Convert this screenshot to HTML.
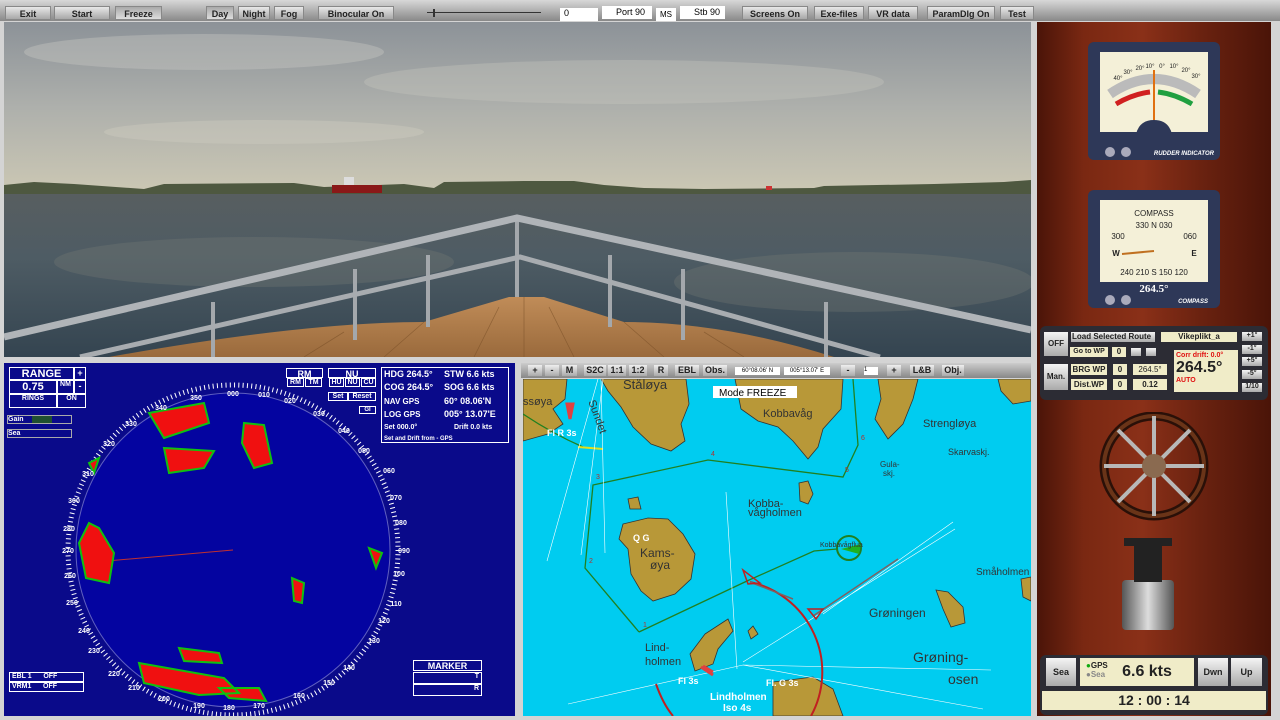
<!DOCTYPE html><html><head><style>
*{margin:0;padding:0;box-sizing:border-box}
body{width:1280px;height:720px;background:#d4d4d4;font-family:"Liberation Sans",sans-serif;position:relative;overflow:hidden}
.a{position:absolute}
.btn{position:absolute;top:6px;height:14px;background:linear-gradient(#e8e8e8,#a8a8a8);font:bold 9px "Liberation Sans",sans-serif;color:#222;text-align:center;line-height:14px;border:1px solid #888}
.cb{position:absolute;top:365px;height:11px;background:linear-gradient(#eee,#aaa);font:bold 9px "Liberation Sans";text-align:center;line-height:11px;color:#222}
.rb{position:absolute;border:1px solid #fff;color:#fff;font:bold 9px "Liberation Sans";text-align:center}
.pb{position:absolute;background:#f0ecc8;font:bold 8px "Liberation Sans";color:#222;text-align:center;line-height:11px}
.gb{position:absolute;background:linear-gradient(#f4f4f4,#aaa);font:bold 8px "Liberation Sans";color:#222;text-align:center}
</style></head><body>
<div class="a" style="left:0;top:0;width:1280px;height:21px;background:linear-gradient(#d8d8d8,#888)"></div>
<div class="btn" style="left:5px;width:46px">Exit</div>
<div class="btn" style="left:54px;width:56px">Start</div>
<div class="btn" style="left:115px;width:47px;background:linear-gradient(#aaa,#ddd)">Freeze</div>
<div class="btn" style="left:206px;width:28px;background:linear-gradient(#aaa,#ddd)">Day</div>
<div class="btn" style="left:238px;width:32px">Night</div>
<div class="btn" style="left:274px;width:30px">Fog</div>
<div class="btn" style="left:318px;width:76px">Binocular On</div>
<div class="a" style="left:427px;top:12px;width:114px;height:1px;background:#333"></div>
<div class="a" style="left:433px;top:9px;width:2px;height:8px;background:#333"></div>
<div class="a" style="left:560px;top:8px;width:38px;height:13px;background:#fff;font-size:9px;padding-left:4px">0</div>
<div class="a" style="left:602px;top:6px;width:50px;height:13px;background:#fff;font-size:9px;padding-left:14px;line-height:13px">Port 90</div>
<div class="a" style="left:656px;top:8px;width:20px;height:13px;background:#fff;font-size:8px;line-height:13px;text-align:center">MS</div>
<div class="a" style="left:680px;top:6px;width:45px;height:13px;background:#fff;font-size:9px;padding-left:14px;line-height:13px">Stb 90</div>
<div class="btn" style="left:742px;width:66px">Screens On</div>
<div class="btn" style="left:814px;width:50px">Exe-files</div>
<div class="btn" style="left:868px;width:50px">VR data</div>
<div class="btn" style="left:927px;width:68px">ParamDlg On</div>
<div class="btn" style="left:1000px;width:34px">Test</div>

<!-- 3D view -->
<svg class="a" style="left:4px;top:22px" width="1027" height="335" viewBox="0 0 1027 335">
<defs><linearGradient id="sky" x1="0" y1="0" x2="0" y2="1"><stop offset="0" stop-color="#8c9298"/><stop offset=".5" stop-color="#aeb0ac"/><stop offset="1" stop-color="#ccc8b4"/></linearGradient>
<linearGradient id="sea" x1="0" y1="0" x2="0" y2="1"><stop offset="0" stop-color="#585e60"/><stop offset=".4" stop-color="#4e5c64"/><stop offset="1" stop-color="#344450"/></linearGradient>
<linearGradient id="deck" x1="0" y1="0" x2="0" y2="1"><stop offset="0" stop-color="#c08c58"/><stop offset="1" stop-color="#9a6a3c"/></linearGradient></defs>
<rect width="1027" height="172" fill="url(#sky)"/>
<ellipse cx="200" cy="30" rx="180" ry="18" fill="#c8c8c4" opacity=".4"/>
<ellipse cx="620" cy="60" rx="260" ry="22" fill="#c8c8c0" opacity=".35"/>
<ellipse cx="260" cy="110" rx="160" ry="12" fill="#d0ccc0" opacity=".4"/>
<rect y="170" width="1027" height="165" fill="url(#sea)"/>
<ellipse cx="250" cy="240" rx="200" ry="25" fill="#7a7e78" opacity=".3"/>
<ellipse cx="850" cy="260" rx="180" ry="30" fill="#7a7e78" opacity=".3"/>
<path d="M0 163 L30 160 L70 162 L140 167 L160 162 L290 161 L320 165 L400 162 L430 166 L440 160 L520 159 L570 159 L600 163 L640 166 L700 167 L810 166 L820 164 L930 162 L1000 160 L1027 158 L1027 172 L0 172Z" fill="#4e5840"/>
<rect x="328" y="163" width="50" height="8" fill="#8a1818"/><rect x="340" y="155" width="10" height="8" fill="#ddd"/>
<rect x="762" y="164" width="6" height="4" fill="#c33"/>
<path d="M105 335 Q300 300 420 300 L505 275 L540 275 L620 300 Q720 300 830 335Z" fill="url(#deck)"/>
<g stroke="#7a5028" stroke-width=".8" opacity=".6"><path d="M520 275 L520 335 M495 285 L470 335 M545 285 L570 335 M420 300 L380 335 M620 300 L660 335 M340 310 L300 335 M700 310 L740 335"/></g>
<g stroke="#a4a8ac" stroke-width="4"><path d="M209 280 V335 M351 247 V318 M424 233 V305 M513 199 V275 M606 233 V305 M679 247 V318 M822 280 V335"/></g>
<path d="M0 315 L513 196 L1027 308" fill="none" stroke="#b0b4b8" stroke-width="7"/>
<path d="M76 335 L516 235 L876 335" fill="none" stroke="#a8acb0" stroke-width="5"/>
</svg>

<!-- Radar -->
<div class="a" style="left:4px;top:363px;width:511px;height:353px;background:#0a0a8a"></div>
<svg class="a" style="left:4px;top:363px" width="511" height="353">
<circle cx="229" cy="187" r="157" fill="#0404a0" stroke="#6060c0" stroke-width="1"/>
<circle cx="229" cy="187" r="165" fill="none" stroke="#fff" stroke-width="5" stroke-dasharray="1 3.3"/>
<line x1="229" y1="187" x2="80" y2="200" stroke="#c03030"/>
<g fill="#f01010" stroke="#10c010" stroke-width="2">
<path d="M145 50 L200 40 L205 60 L160 75 Z M160 85 L210 88 L200 105 L165 110Z M240 60 L260 62 L268 100 L250 105 L238 80Z M85 160 L95 165 L110 190 L105 220 L82 215 L75 180Z M288 215 L300 220 L298 240 L290 238Z M135 300 L220 315 L235 330 L195 332 L140 320Z M175 285 L215 290 L218 300 L180 298Z M85 100 L95 95 L90 110Z M365 185 L378 190 L372 205Z M215 325 L255 325 L262 338 L225 335Z"/>
</g>
<g fill="#fff" font-size="7" font-weight="bold" font-family="Liberation Sans" text-anchor="middle">
<text x="229" y="33">000</text><text x="192" y="37">350</text><text x="157" y="47">340</text><text x="127" y="63">330</text><text x="105" y="83">320</text><text x="84" y="113">310</text><text x="70" y="140">300</text><text x="65" y="168">280</text><text x="64" y="190">270</text><text x="66" y="215">260</text><text x="68" y="242">250</text><text x="80" y="270">240</text><text x="90" y="290">230</text><text x="110" y="313">220</text><text x="130" y="327">210</text><text x="160" y="338">200</text><text x="195" y="345">190</text><text x="225" y="347">180</text><text x="255" y="345">170</text><text x="295" y="335">160</text><text x="325" y="322">150</text><text x="345" y="307">140</text><text x="370" y="280">130</text><text x="380" y="260">120</text><text x="392" y="243">110</text><text x="395" y="213">100</text><text x="400" y="190">090</text><text x="397" y="162">080</text><text x="392" y="137">070</text><text x="385" y="110">060</text><text x="360" y="90">050</text><text x="340" y="70">040</text><text x="315" y="53">030</text><text x="286" y="40">020</text><text x="260" y="34">010</text>
</g></svg>
<div class="rb" style="left:9px;top:367px;width:65px;height:13px;font-size:11px">RANGE</div>
<div class="rb" style="left:74px;top:367px;width:12px;height:13px">+</div>
<div class="rb" style="left:9px;top:380px;width:48px;height:14px;font-size:11px">0.75</div>
<div class="rb" style="left:57px;top:380px;width:17px;height:14px;font-size:7px">NM</div>
<div class="rb" style="left:74px;top:380px;width:12px;height:14px">-</div>
<div class="rb" style="left:9px;top:394px;width:48px;height:14px;font-size:7px">RINGS</div>
<div class="rb" style="left:57px;top:394px;width:29px;height:14px;font-size:7px">ON</div>
<div class="rb" style="left:7px;top:415px;width:65px;height:9px;font-size:7px;text-align:left;border-color:#aaa">Gain<span style="position:absolute;left:24px;top:0;width:20px;height:7px;background:#205030"></span></div>
<div class="rb" style="left:7px;top:429px;width:65px;height:9px;font-size:7px;text-align:left;border-color:#aaa">Sea</div>
<div class="rb" style="left:286px;top:368px;width:37px;height:10px">RM</div>
<div class="rb" style="left:287px;top:378px;width:17px;height:9px;font-size:7px">RM</div><div class="rb" style="left:305px;top:378px;width:17px;height:9px;font-size:7px">TM</div>
<div class="rb" style="left:328px;top:368px;width:48px;height:10px">NU</div>
<div class="rb" style="left:329px;top:378px;width:15px;height:9px;font-size:7px">HU</div><div class="rb" style="left:345px;top:378px;width:15px;height:9px;font-size:7px">NU</div><div class="rb" style="left:361px;top:378px;width:15px;height:9px;font-size:7px">CU</div>
<div class="rb" style="left:328px;top:392px;width:20px;height:9px;font-size:7px">Set</div><div class="rb" style="left:348px;top:392px;width:28px;height:9px;font-size:7px">Reset</div>
<div class="rb" style="left:359px;top:406px;width:17px;height:8px;font-size:6px">GI</div>
<div class="a" style="left:381px;top:367px;width:128px;height:76px;border:1px solid #fff;color:#fff;font:bold 9px 'Liberation Sans';line-height:13px">
<div style="position:absolute;left:2px;top:0">HDG 264.5°</div><div style="position:absolute;left:62px;top:0">STW 6.6 kts</div>
<div style="position:absolute;left:2px;top:13px">COG 264.5°</div><div style="position:absolute;left:62px;top:13px">SOG 6.6 kts</div>
<div style="position:absolute;left:2px;top:27px;font-size:8px">NAV GPS</div><div style="position:absolute;left:62px;top:27px">60° 08.06'N</div>
<div style="position:absolute;left:2px;top:40px;font-size:8px">LOG GPS</div><div style="position:absolute;left:62px;top:40px">005° 13.07'E</div>
<div style="position:absolute;left:2px;top:53px;font-size:7px">Set 000.0°</div><div style="position:absolute;left:72px;top:53px;font-size:7px">Drift 0.0 kts</div>
<div style="position:absolute;left:2px;top:65px;font-size:6px">Set and Drift from -  GPS</div></div>
<div class="rb" style="left:9px;top:672px;width:75px;height:10px;font-size:7px;text-align:left">&nbsp;EBL 1 &nbsp;&nbsp;&nbsp;&nbsp;&nbsp;OFF</div>
<div class="rb" style="left:9px;top:682px;width:75px;height:10px;font-size:7px;text-align:left">&nbsp;VRM1 &nbsp;&nbsp;&nbsp;&nbsp;&nbsp;OFF</div>
<div class="rb" style="left:413px;top:660px;width:69px;height:11px">MARKER</div>
<div class="rb" style="left:413px;top:672px;width:69px;height:12px;font-size:7px;text-align:right">T&nbsp;</div>
<div class="rb" style="left:413px;top:684px;width:69px;height:12px;font-size:7px;text-align:right">R&nbsp;</div>

<!-- Chart -->
<div class="a" style="left:521px;top:363px;width:510px;height:15px;background:linear-gradient(#ccc,#888)"></div>
<div class="cb" style="left:528px;width:14px">+</div><div class="cb" style="left:545px;width:14px">-</div><div class="cb" style="left:562px;width:15px">M</div><div class="cb" style="left:584px;width:22px">S2C</div><div class="cb" style="left:608px;width:18px">1:1</div><div class="cb" style="left:629px;width:18px">1:2</div><div class="cb" style="left:654px;width:14px">R</div><div class="cb" style="left:675px;width:24px">EBL</div><div class="cb" style="left:703px;width:24px">Obs.</div>
<div class="a" style="left:735px;top:367px;width:45px;height:8px;background:#fff;font-size:6px;text-align:center;line-height:8px">60°08.06' N</div>
<div class="a" style="left:784px;top:367px;width:46px;height:8px;background:#fff;font-size:6px;text-align:center;line-height:8px">005°13.07' E</div>
<div class="cb" style="left:841px;width:14px">-</div><div class="a" style="left:864px;top:367px;width:14px;height:8px;background:#fff;font-size:6px">1</div><div class="cb" style="left:887px;width:14px">+</div><div class="cb" style="left:910px;width:24px">L&amp;B</div><div class="cb" style="left:942px;width:22px">Obj.</div>
<svg class="a" style="left:523px;top:379px" width="508" height="337">
<rect width="508" height="337" fill="#00ccf0"/>
<g fill="#b89838" stroke="#333" stroke-width=".8">
<path d="M0 0 L44 0 L42 20 L30 30 L40 45 L25 55 L0 62Z"/>
<path d="M78 0 L163 0 L166 25 L158 45 L162 62 L148 72 L128 65 L110 48 L98 28 L85 12Z"/>
<path d="M212 0 L320 0 L318 30 L300 50 L295 68 L285 80 L270 62 L255 48 L235 42 L218 30Z"/>
<path d="M355 0 L395 0 L390 20 L380 45 L365 60 L352 40 L358 20Z"/>
<path d="M475 0 L508 0 L508 22 L490 25 L478 12Z"/>
<path d="M100 145 L125 139 L145 140 L160 155 L172 175 L168 200 L152 215 L130 222 L118 212 L108 195 L105 170 L96 160Z"/>
<path d="M105 120 L115 118 L118 130 L107 130Z"/>
<path d="M182 255 L205 240 L210 252 L195 270 L190 285 L172 292 L167 275Z"/>
<path d="M250 303 L290 298 L310 310 L320 337 L250 337Z"/>
<path d="M413 211 L425 213 L440 228 L442 244 L428 248 L420 230Z"/>
<path d="M498 200 L508 198 L508 222 L500 218Z"/>
<path d="M276 104 L285 102 L290 115 L285 125 L277 122Z"/>
<path d="M225 252 L230 247 L235 255 L228 260Z"/>
</g>
<path d="M116 253 L62 189 L70 106 L185 81 L320 98 L335 66 L330 0 M116 253 L224 202 L291 172 L314 170" fill="none" stroke="#208020" stroke-width="1.3"/>
<path d="M0 35 Q30 55 60 68" fill="none" stroke="#208020" stroke-width="1.3"/>
<path d="M55 68 L80 70" stroke="#e0e020" stroke-width="2"/>
<path d="M75 0 L24 182 M80 0 L58 176 M78 0 L82 174 M203 113 L214 290 M430 143 L300 235 M432 150 L220 283 M220 286 L468 291 M220 286 L45 325 M220 286 L460 330" stroke="#fff" stroke-width=".6"/>
<path d="M227 203 A92 92 0 0 1 288 337" fill="none" stroke="#c02020" stroke-width="2"/>
<path d="M133 305 Q140 325 150 337" fill="none" stroke="#c02020" stroke-width="2"/>
<path d="M227 203 L270 220 M290 237 L375 180" stroke="#806060" stroke-width="1.5"/>
<path d="M220 191 L225 205 L237 204Z M285 230 L300 230 L293 240Z" fill="none" stroke="#c02020" stroke-width="1.5"/>
<circle cx="326" cy="169" r="12" fill="none" stroke="#208020" stroke-width="2"/>
<path d="M318 170 L338 165 L336 175Z" fill="#20b020"/>
<path d="M44 25 L50 25 L47 40Z M180 287 L190 293 M178 288 L190 296" stroke="#e04040" stroke-width="3" fill="#e04040"/>
<rect x="190" y="7" width="84" height="12" fill="#fff"/>
<g font-family="Liberation Sans" fill="#333" font-size="11"><text x="196" y="17" font-size="10" fill="#000">Mode  FREEZE</text>
<text x="100" y="10" font-size="13">Ståløya</text><text x="0" y="26" font-size="11">ssøya</text><text x="240" y="38">Kobbavåg</text><text x="400" y="48">Strengløya</text><text x="425" y="76" font-size="9">Skarvaskj.</text><text x="225" y="128" font-size="11">Kobba-</text><text x="225" y="137" font-size="11">vågholmen</text><text x="117" y="178" font-size="12">Kams-</text><text x="127" y="190" font-size="12">øya</text><text x="346" y="238" font-size="12">Grøningen</text><text x="390" y="283" font-size="14">Grøning-</text><text x="425" y="305" font-size="14">osen</text><text x="453" y="196" font-size="10">Småholmen</text><text x="122" y="272" font-size="11">Lind-</text><text x="122" y="286" font-size="11">holmen</text><text x="357" y="88" font-size="8">Gula-</text><text x="360" y="97" font-size="8">skj.</text><text x="297" y="168" font-size="7">Kobbavågflua</text></g>
<g fill="#b03030" font-family="Liberation Sans" font-size="7"><text x="120" y="248">1</text><text x="66" y="184">2</text><text x="73" y="100">3</text><text x="188" y="77">4</text><text x="322" y="93">5</text><text x="338" y="61">6</text></g>
<g fill="#fff" font-family="Liberation Sans" font-size="9" font-weight="bold"><text x="24" y="57">Fl R 3s</text><text x="110" y="162">Q G</text><text x="155" y="305">Fl 3s</text><text x="243" y="307">Fl. G 3s</text><text x="187" y="321" font-size="10">Lindholmen</text><text x="200" y="332" font-size="10">Iso 4s</text></g>
<text x="60" y="30" font-family="Liberation Sans" font-size="11" fill="#333" transform="rotate(70 68 30)">Sundet</text>
</svg>

<!-- Right panel -->
<div class="a" style="left:1037px;top:22px;width:234px;height:694px;background:linear-gradient(90deg,#4a1408,#7a2812 20%,#8a3018 45%,#6a2210 70%,#4a1408)"></div>
<svg class="a" style="left:1088px;top:42px" width="132" height="270">
<rect width="132" height="118" rx="6" fill="#2e3858"/>
<rect x="12" y="10" width="108" height="92" fill="#f4f0d8"/>
<path d="M22 52 Q66 22 110 52" fill="none" stroke="#bbb" stroke-width="10"/>
<path d="M28 62 Q45 52 62 50" fill="none" stroke="#d02020" stroke-width="5"/>
<path d="M70 50 Q87 52 104 62" fill="none" stroke="#20a040" stroke-width="5"/>
<g font-family="Liberation Sans" font-size="6" fill="#222" text-anchor="middle"><text x="30" y="38">40°</text><text x="40" y="32">30°</text><text x="52" y="28">20°</text><text x="62" y="26">10°</text><text x="74" y="26">0°</text><text x="86" y="26">10°</text><text x="98" y="30">20°</text><text x="108" y="36">30°</text></g>
<line x1="66" y1="28" x2="66" y2="90" stroke="#e07010" stroke-width="2"/>
<path d="M47 102 Q47 78 66 78 Q85 78 85 102Z M12 90 H120 V102 H12Z" fill="#2e3858"/>
<circle cx="22" cy="110" r="5" fill="#aab"/><circle cx="38" cy="110" r="5" fill="#aab"/>
<text x="126" y="113" font-family="Liberation Sans" font-size="6" font-style="italic" font-weight="bold" fill="#fff" text-anchor="end">RUDDER INDICATOR</text>
<rect y="148" width="132" height="118" rx="6" fill="#2e3858"/>
<rect x="12" y="158" width="108" height="82" fill="#f4f0d8"/>
<g font-family="Liberation Sans" font-size="8" fill="#222" text-anchor="middle"><text x="66" y="174">COMPASS</text><text x="66" y="186">330 N 030</text><text x="30" y="197">300</text><text x="102" y="197">060</text><text x="28" y="214" font-weight="bold">W</text><text x="106" y="214" font-weight="bold">E</text><text x="66" y="233">240 210 S 150 120</text></g>
<path d="M34 212 L66 209" stroke="#c07020" stroke-width="2"/>
<rect x="12" y="240" width="108" height="12" fill="#2e3858"/>
<text x="66" y="250" font-family="Liberation Serif" font-size="11" font-weight="bold" fill="#fff" text-anchor="middle">264.5°</text>
<circle cx="22" cy="258" r="5" fill="#aab"/><circle cx="38" cy="258" r="5" fill="#aab"/>
<text x="120" y="261" font-family="Liberation Sans" font-size="6" font-style="italic" font-weight="bold" fill="#fff" text-anchor="end">COMPASS</text>
</svg>
<div class="a" style="left:1040px;top:326px;width:228px;height:74px;background:#2c2c34;border-radius:6px"></div>
<div class="gb" style="left:1044px;top:332px;width:24px;height:24px;line-height:24px">OFF</div>
<div class="gb" style="left:1044px;top:364px;width:24px;height:26px;line-height:26px">Man.</div>
<div class="gb" style="left:1071px;top:332px;width:84px;height:10px;line-height:10px;text-align:left;padding-left:1px">Load Selected Route</div>
<div class="pb" style="left:1161px;top:332px;width:76px;height:10px;line-height:10px">Vikeplikt_a</div>
<div class="pb" style="left:1070px;top:347px;width:38px;height:10px;line-height:10px;font-size:7px">Go to WP</div>
<div class="pb" style="left:1112px;top:347px;width:14px;height:10px;line-height:10px">0</div>
<div class="gb" style="left:1131px;top:348px;width:10px;height:8px"></div><div class="gb" style="left:1146px;top:348px;width:10px;height:8px"></div>
<div class="pb" style="left:1071px;top:364px;width:36px;height:11px">BRG WP</div><div class="pb" style="left:1113px;top:364px;width:14px;height:11px">0</div><div class="pb" style="left:1133px;top:364px;width:34px;height:11px;font-weight:normal">264.5°</div>
<div class="pb" style="left:1071px;top:379px;width:36px;height:11px">Dist.WP</div><div class="pb" style="left:1113px;top:379px;width:14px;height:11px">0</div><div class="pb" style="left:1133px;top:379px;width:34px;height:11px">0.12</div>
<div class="a" style="left:1174px;top:350px;width:64px;height:42px;background:#f0ecc8"><div style="font:bold 7px 'Liberation Sans';color:#e01010;padding:2px 0 0 2px">Corr drift: 0.0°</div><div style="font:bold 16px 'Liberation Sans';color:#222;padding-left:2px">264.5°</div><div style="font:bold 7px 'Liberation Sans';color:#e01010;padding-left:2px">AUTO</div></div>
<div class="gb" style="left:1242px;top:332px;width:20px;height:9px;font-size:7px">+1°</div><div class="gb" style="left:1242px;top:345px;width:20px;height:9px;font-size:7px">-1°</div><div class="gb" style="left:1242px;top:357px;width:20px;height:9px;font-size:7px">+5°</div><div class="gb" style="left:1242px;top:370px;width:20px;height:9px;font-size:7px">-5°</div><div class="gb" style="left:1242px;top:383px;width:20px;height:9px;font-size:7px">1/10</div>
<svg class="a" style="left:1096px;top:412px" width="116" height="110"><circle cx="58" cy="54" r="50" fill="none" stroke="#2a1008" stroke-width="9"/><circle cx="58" cy="54" r="50" fill="none" stroke="#6a3418" stroke-width="4"/><g stroke="#b8b8b8" stroke-width="4"><line x1="58" y1="4" x2="58" y2="104"/><line x1="8" y1="54" x2="108" y2="54"/><line x1="22" y1="18" x2="94" y2="90"/><line x1="94" y1="18" x2="22" y2="90"/></g><circle cx="58" cy="54" r="12" fill="#8a6a50"/></svg>
<div class="a" style="left:1124px;top:538px;width:48px;height:8px;background:#222"></div>
<div class="a" style="left:1122px;top:580px;width:52px;height:50px;background:linear-gradient(90deg,#555,#ddd,#555);border-radius:4px"></div>
<div class="a" style="left:1134px;top:546px;width:28px;height:36px;background:#222"></div>
<div class="a" style="left:1040px;top:655px;width:228px;height:60px;background:#2c2c34;border-radius:6px"></div>
<div class="gb" style="left:1046px;top:658px;width:30px;height:28px;line-height:28px;font-size:9px">Sea</div>
<div class="pb" style="left:1080px;top:658px;width:114px;height:28px;font-size:16px;line-height:28px;padding-left:20px">6.6 kts</div>
<div class="a" style="left:1086px;top:661px;font:bold 8px 'Liberation Sans';color:#222"><span style="color:#1a1">●</span>GPS<br><span style="color:#888">●Sea</span></div>
<div class="gb" style="left:1198px;top:658px;width:30px;height:28px;line-height:28px;font-size:9px">Dwn</div>
<div class="gb" style="left:1231px;top:658px;width:31px;height:28px;line-height:28px;font-size:9px">Up</div>
<div class="pb" style="left:1042px;top:691px;width:224px;height:19px;line-height:19px;font-size:14px">12 : 00 : 14</div>
</body></html>
